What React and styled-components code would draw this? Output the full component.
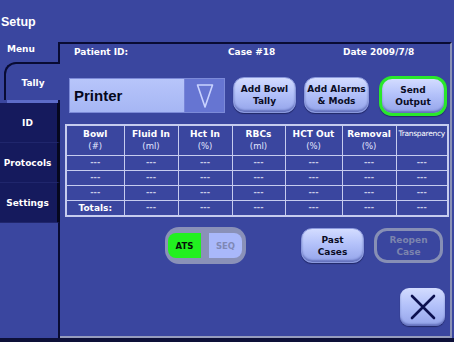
import React from "react";
import styled, { createGlobalStyle } from "styled-components";

const GlobalStyle = createGlobalStyle`
  html, body {
    margin: 0;
    padding: 0;
    background: #3a469f;
  }
  body {
    font-family: "DejaVu Sans", sans-serif;
  }
`;

// the last column takes what is left of the table width
const columns = [
  { name: "Bowl", unit: "(#)", width: 58 },
  { name: "Fluid In", unit: "(ml)", width: 54 },
  { name: "Hct In", unit: "(%)", width: 54 },
  { name: "RBCs", unit: "(ml)", width: 53 },
  { name: "HCT Out", unit: "(%)", width: 57 },
  { name: "Removal", unit: "(%)", width: 54 },
  { name: "Transparency", unit: "", small: true },
];

const rows = [
  ["---", "---", "---", "---", "---", "---", "---"],
  ["---", "---", "---", "---", "---", "---", "---"],
  ["---", "---", "---", "---", "---", "---", "---"],
  ["Totals:", "---", "---", "---", "---", "---", "---"],
];

function App() {
  return (
    <Screen>
      <GlobalStyle />
      <TitleBar>Setup</TitleBar>
      <Body>
        <Sidebar>
          <MenuLabel>Menu</MenuLabel>
          <ActiveTab>Tally</ActiveTab>
          <TabStripe />
          <Tab>ID</Tab>
          <Tab>Protocols</Tab>
          <Tab>Settings</Tab>
          <SideFill />
        </Sidebar>

        <Panel>
          <InfoRow>
            <InfoCell $width={154}>Patient ID:</InfoCell>
            <InfoCell $width={115}>Case #18</InfoCell>
            <InfoCell>Date 2009/7/8</InfoCell>
          </InfoRow>

          <Controls>
            <Dropdown>
              <DropdownLabel>Printer</DropdownLabel>
              <DropdownArrow>
                <svg width="18" height="26" viewBox="0 0 18 26">
                  <path
                    d="M1.5 2 L16.5 2 L9 24 Z"
                    fill="none"
                    stroke="#c9d3ff"
                    strokeWidth="1.6"
                    strokeLinejoin="round"
                  />
                </svg>
              </DropdownArrow>
            </Dropdown>
            <PillButton $width={63}>
              Add Bowl
              <br />
              Tally
            </PillButton>
            <PillButton $width={65}>
              Add Alarms
              <br />& Mods
            </PillButton>
            <PillButton $width={68} $highlight>
              Send
              <br />
              Output
            </PillButton>
          </Controls>

          <Table>
            <colgroup>
              {columns.map((c) => (
                <col key={c.name} style={c.width ? { width: c.width } : undefined} />
              ))}
            </colgroup>
            <thead>
              <tr>
                {columns.map((c) => (
                  <HeadCell key={c.name} $small={c.small}>
                    {c.name}
                    {c.unit && (
                      <>
                        <br />
                        <Unit>{c.unit}</Unit>
                      </>
                    )}
                  </HeadCell>
                ))}
              </tr>
            </thead>
            <tbody>
              {rows.map((r, i) => (
                <tr key={i}>
                  {r.map((v, j) => (
                    <Cell key={j} $label={v !== "---"}>
                      {v}
                    </Cell>
                  ))}
                </tr>
              ))}
            </tbody>
          </Table>

          <BottomRow>
            <Toggle>
              <ToggleOption $active>ATS</ToggleOption>
              <ToggleOption>SEQ</ToggleOption>
            </Toggle>
            <PillButton $width={63} $height={35}>
              Past
              <br />
              Cases
            </PillButton>
            <GhostButton>
              Reopen
              <br />
              Case
            </GhostButton>
          </BottomRow>

          <CloseButton>
            <svg width="28" height="28" viewBox="0 0 28 28">
              <path
                d="M3 3 L25 25 M25 3 L3 25"
                stroke="#0d1150"
                strokeWidth="2.6"
                strokeLinecap="round"
              />
            </svg>
          </CloseButton>
        </Panel>
      </Body>
      <BottomStrip />
    </Screen>
  );
}

const Screen = styled.div`
  width: 454px;
  height: 342px;
  display: flex;
  flex-direction: column;
  background: #3a469f;
  overflow: hidden;
  color: #ffffff;
`;

const TitleBar = styled.div`
  height: 42px;
  flex-shrink: 0;
  box-sizing: border-box;
  padding: 15px 0 0 1px;
  font-family: "Liberation Sans", Arial, sans-serif;
  font-weight: 700;
  font-size: 12.5px;
  line-height: 14px;
  color: #ffffff;
`;

const Body = styled.div`
  flex: 1;
  display: flex;
  min-height: 0;
`;

const Sidebar = styled.div`
  flex: 0 0 60px;
  display: flex;
  flex-direction: column;
`;

const MenuLabel = styled.div`
  height: 20px;
  box-sizing: border-box;
  padding: 1px 0 0 7px;
  font-size: 9px;
  font-weight: 700;
  line-height: 12px;
  border-right: 2px solid #080b33;
`;

const ActiveTab = styled.div`
  height: 38px;
  margin-left: 4px;
  box-sizing: border-box;
  border-top: 2px solid #080b33;
  border-left: 2px solid #080b33;
  border-top-left-radius: 12px;
  display: flex;
  align-items: center;
  justify-content: center;
  padding-top: 2px;
  font-size: 9px;
  font-weight: 700;
`;

const TabStripe = styled.div`
  height: 3px;
  margin-left: 7px;
  background: #5d6cc9;
  border-right: 2px solid #080b33;
`;

const Tab = styled.div`
  height: 40px;
  box-sizing: border-box;
  background: #151a5d;
  border-right: 3px solid #05071f;
  border-bottom: 1px solid #20266c;
  display: flex;
  align-items: center;
  justify-content: center;
  font-size: 9px;
  font-weight: 700;
  padding-right: 2px;
`;

const SideFill = styled.div`
  flex: 1;
  border-right: 2px solid #080b33;
`;

const Panel = styled.div`
  flex: 1;
  min-width: 0;
  margin-right: 2px;
  display: flex;
  flex-direction: column;
  border-top: 2px solid #080b33;
  border-right: 2px solid #8a91b6;
  border-bottom: 2px solid #959cbd;
  padding-top: 2px;
`;

const InfoRow = styled.div`
  display: flex;
  padding-left: 14px;
  height: 12px;
`;

const InfoCell = styled.div`
  width: ${(p) => (p.$width ? `${p.$width}px` : "auto")};
  font-size: 9px;
  font-weight: 700;
  line-height: 12px;
  white-space: nowrap;
`;

const Controls = styled.div`
  display: flex;
  align-items: flex-start;
  margin: 19px 0 0 9px;
  gap: 8px;
  height: 39px;
`;

const Dropdown = styled.div`
  width: 156px;
  height: 35px;
  margin-top: 1px;
  box-sizing: border-box;
  display: flex;
  border: 1px solid #7c8ad8;
  background: linear-gradient(#b7c5fa, #a6b6f4);
`;

const DropdownLabel = styled.div`
  flex: 1;
  display: flex;
  align-items: center;
  padding-left: 4px;
  font-family: "Liberation Sans", Arial, sans-serif;
  font-weight: 700;
  font-size: 15px;
  color: #05071c;
`;

const DropdownArrow = styled.div`
  width: 39px;
  display: flex;
  align-items: center;
  justify-content: center;
  background: #6675d2;
  border-left: 1px solid #7885d8;
`;

const PillButton = styled.div`
  width: ${(p) => p.$width}px;
  height: ${(p) => p.$height || 36}px;
  box-sizing: border-box;
  border-radius: 11px;
  display: flex;
  align-items: center;
  justify-content: center;
  text-align: center;
  font-size: 9px;
  font-weight: 700;
  line-height: 12px;
  color: #0a0c24;
  background: linear-gradient(#d3dcff 0%, #b4c2fa 45%, #94a4ea 100%);
  box-shadow: inset 0 -2px 2px rgba(40, 50, 130, 0.45),
    0 1px 1px rgba(10, 12, 50, 0.5);
  border: ${(p) => (p.$highlight ? "3px solid #29e82b" : "1px solid #8a98dc")};
  ${(p) => p.$highlight && "height: 40px; margin-top: -1px; margin-left: 2px; border-radius: 13px;"}
`;

const Table = styled.table`
  margin: 8px 0 0 5px;
  width: 384px;
  border-collapse: collapse;
  table-layout: fixed;
  border: 2px solid #c6ccef;
`;

const HeadCell = styled.th`
  height: 27px;
  padding: 0;
  border: 1.5px solid #c6ccef;
  vertical-align: top;
  text-align: center;
  font-size: ${(p) => (p.$small ? "7.5px" : "9px")};
  font-weight: ${(p) => (p.$small ? 400 : 700)};
  line-height: 12px;
  padding-top: 2px;
  white-space: nowrap;
  letter-spacing: ${(p) => (p.$small ? "-0.3px" : "0")};
  overflow: visible;
`;

const Unit = styled.span`
  font-weight: 400;
  font-size: 8.5px;
  color: #e2e6ff;
`;

const Cell = styled.td`
  height: 14px;
  padding: 0;
  border: 1.5px solid #c6ccef;
  text-align: center;
  font-size: ${(p) => (p.$label ? "9px" : "8px")};
  font-weight: 700;
  line-height: 12px;
  color: ${(p) => (p.$label ? "#ffffff" : "#c8cce8")};
`;

const BottomRow = styled.div`
  display: flex;
  align-items: center;
  margin: 10px 0 0 105px;
  height: 37px;
`;

const Toggle = styled.div`
  width: 81px;
  height: 37px;
  box-sizing: border-box;
  display: flex;
  align-items: center;
  justify-content: space-between;
  padding: 0 4px 0 3px;
  border-radius: 14px;
  background: #8a91b8;
  margin-right: 55px;
`;

const ToggleOption = styled.div`
  width: 33px;
  height: 25px;
  display: flex;
  align-items: center;
  justify-content: center;
  font-size: 8.5px;
  font-weight: 700;
  border-radius: ${(p) => (p.$active ? "8px 0 0 8px" : "0 8px 8px 0")};
  background: ${(p) => (p.$active ? "#22f020" : "#a9b8fa")};
  color: ${(p) => (p.$active ? "#06100a" : "#7f88b5")};
`;

const GhostButton = styled.div`
  width: 69px;
  height: 35px;
  margin-left: 10px;
  box-sizing: border-box;
  border: 3px solid #878fb5;
  border-radius: 13px;
  display: flex;
  align-items: center;
  justify-content: center;
  text-align: center;
  font-size: 9px;
  font-weight: 700;
  line-height: 12px;
  color: #7c84ae;
`;

const CloseButton = styled.div`
  align-self: flex-end;
  margin: auto 5px 10px 0;
  width: 45px;
  height: 38px;
  box-sizing: border-box;
  border-radius: 9px;
  display: flex;
  align-items: center;
  justify-content: center;
  background: linear-gradient(#d3dcff 0%, #b4c2fa 45%, #94a4ea 100%);
  box-shadow: inset 0 -2px 2px rgba(40, 50, 130, 0.45),
    0 1px 1px rgba(10, 12, 50, 0.5);
`;

const BottomStrip = styled.div`
  height: 4px;
  flex-shrink: 0;
  background: #0d1038;
`;

export default App;
